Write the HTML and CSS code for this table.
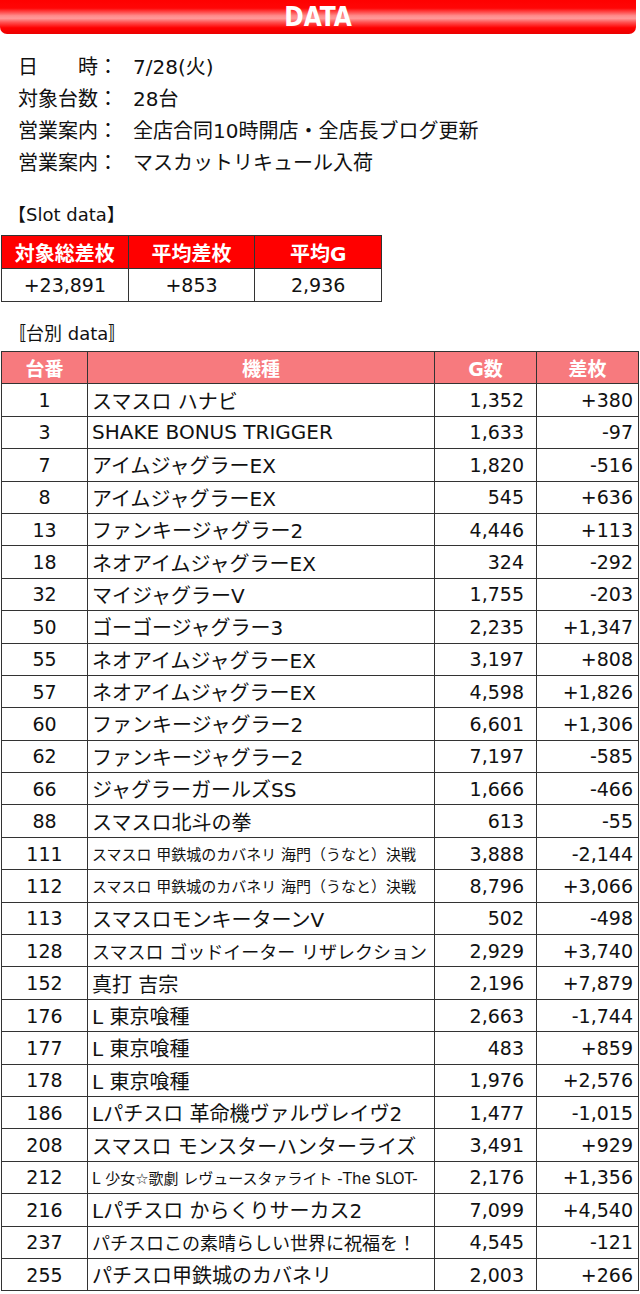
FILE: index.html
```html
<!DOCTYPE html>
<html lang="ja">
<head>
<meta charset="utf-8">
<title>DATA</title>
<link rel="stylesheet" href="styles.css">
</head>
<body>
<div class="page">
  <div class="titlebar">DATA</div>

  <div class="info">
    <div class="info-row"><span class="lbl">日　　時：</span><span class="val">7/28(火)</span></div>
    <div class="info-row"><span class="lbl">対象台数：</span><span class="val">28台</span></div>
    <div class="info-row"><span class="lbl">営業案内：</span><span class="val">全店合同10時開店・全店長ブログ更新</span></div>
    <div class="info-row"><span class="lbl">営業案内：</span><span class="val">マスカットリキュール入荷</span></div>
  </div>

  <div class="section-label slot-label">【Slot data】</div>
  <table class="slot">
    <tr><th>対象総差枚</th><th>平均差枚</th><th>平均G</th></tr>
    <tr><td>+23,891</td><td>+853</td><td>2,936</td></tr>
  </table>

  <div class="section-label unit-label">〚台別 data〛</div>
  <table class="units">
    <colgroup><col class="c1"><col class="c2"><col class="c3"><col class="c4"></colgroup>
    <thead>
      <tr><th>台番</th><th>機種</th><th>G数</th><th>差枚</th></tr>
    </thead>
    <tbody>
      <tr><td class="no">1</td><td class="name">スマスロ ハナビ</td><td class="g">1,352</td><td class="d">+380</td></tr>
      <tr><td class="no">3</td><td class="name">SHAKE BONUS TRIGGER</td><td class="g">1,633</td><td class="d">-97</td></tr>
      <tr><td class="no">7</td><td class="name">アイムジャグラーEX</td><td class="g">1,820</td><td class="d">-516</td></tr>
      <tr><td class="no">8</td><td class="name">アイムジャグラーEX</td><td class="g">545</td><td class="d">+636</td></tr>
      <tr><td class="no">13</td><td class="name">ファンキージャグラー2</td><td class="g">4,446</td><td class="d">+113</td></tr>
      <tr><td class="no">18</td><td class="name">ネオアイムジャグラーEX</td><td class="g">324</td><td class="d">-292</td></tr>
      <tr><td class="no">32</td><td class="name">マイジャグラーV</td><td class="g">1,755</td><td class="d">-203</td></tr>
      <tr><td class="no">50</td><td class="name">ゴーゴージャグラー3</td><td class="g">2,235</td><td class="d">+1,347</td></tr>
      <tr><td class="no">55</td><td class="name">ネオアイムジャグラーEX</td><td class="g">3,197</td><td class="d">+808</td></tr>
      <tr><td class="no">57</td><td class="name">ネオアイムジャグラーEX</td><td class="g">4,598</td><td class="d">+1,826</td></tr>
      <tr><td class="no">60</td><td class="name">ファンキージャグラー2</td><td class="g">6,601</td><td class="d">+1,306</td></tr>
      <tr><td class="no">62</td><td class="name">ファンキージャグラー2</td><td class="g">7,197</td><td class="d">-585</td></tr>
      <tr><td class="no">66</td><td class="name">ジャグラーガールズSS</td><td class="g">1,666</td><td class="d">-466</td></tr>
      <tr><td class="no">88</td><td class="name">スマスロ北斗の拳</td><td class="g">613</td><td class="d">-55</td></tr>
      <tr><td class="no">111</td><td class="name xs">スマスロ 甲鉄城のカバネリ 海門（うなと）決戦</td><td class="g">3,888</td><td class="d">-2,144</td></tr>
      <tr><td class="no">112</td><td class="name xs">スマスロ 甲鉄城のカバネリ 海門（うなと）決戦</td><td class="g">8,796</td><td class="d">+3,066</td></tr>
      <tr><td class="no">113</td><td class="name">スマスロモンキーターンV</td><td class="g">502</td><td class="d">-498</td></tr>
      <tr><td class="no">128</td><td class="name sm">スマスロ ゴッドイーター リザレクション</td><td class="g">2,929</td><td class="d">+3,740</td></tr>
      <tr><td class="no">152</td><td class="name">真打 吉宗</td><td class="g">2,196</td><td class="d">+7,879</td></tr>
      <tr><td class="no">176</td><td class="name">L 東京喰種</td><td class="g">2,663</td><td class="d">-1,744</td></tr>
      <tr><td class="no">177</td><td class="name">L 東京喰種</td><td class="g">483</td><td class="d">+859</td></tr>
      <tr><td class="no">178</td><td class="name">L 東京喰種</td><td class="g">1,976</td><td class="d">+2,576</td></tr>
      <tr><td class="no">186</td><td class="name">Lパチスロ 革命機ヴァルヴレイヴ2</td><td class="g">1,477</td><td class="d">-1,015</td></tr>
      <tr><td class="no">208</td><td class="name">スマスロ モンスターハンターライズ</td><td class="g">3,491</td><td class="d">+929</td></tr>
      <tr><td class="no">212</td><td class="name xxs">L 少女☆歌劇 レヴュースタァライト -The SLOT-</td><td class="g">2,176</td><td class="d">+1,356</td></tr>
      <tr><td class="no">216</td><td class="name">Lパチスロ からくりサーカス2</td><td class="g">7,099</td><td class="d">+4,540</td></tr>
      <tr><td class="no">237</td><td class="name sm">パチスロこの素晴らしい世界に祝福を！</td><td class="g">4,545</td><td class="d">-121</td></tr>
      <tr><td class="no">255</td><td class="name">パチスロ甲鉄城のカバネリ</td><td class="g">2,003</td><td class="d">+266</td></tr>
    </tbody>
  </table>
</div>
</body>
</html>
```

FILE: styles.css
```css
html, body {
  margin: 0;
  padding: 0;
  background: #ffffff;
}

body {
  font-family: "DejaVu Sans", "Noto Sans CJK JP", sans-serif;
  color: #111111;
}

.page {
  width: 640px;
}

.titlebar {
  width: 636px;
  height: 34px;
  border-radius: 0 0 7px 7px;
  background: linear-gradient(to bottom,
    #ff0000 0%,
    #ff0606 24%,
    #ff8a8a 46%,
    #ff9a9a 54%,
    #ff5050 66%,
    #ff0000 82%,
    #ea0000 100%);
  color: #ffffff;
  font-family: "DejaVu Sans Condensed", "DejaVu Sans", sans-serif;
  font-weight: bold;
  font-size: 26px;
  line-height: 34px;
  text-align: center;
}

.info {
  margin-top: 17px;
  padding-left: 18px;
  font-size: 20px;
}

.info-row {
  display: flex;
  height: 32px;
  line-height: 32px;
  white-space: nowrap;
}

.lbl {
  width: 115px;
}

.section-label {
  font-size: 18px;
  line-height: 28px;
  height: 28px;
  padding-left: 8px;
  white-space: nowrap;
}

.slot-label {
  margin-top: 22px;
}

table {
  border-collapse: collapse;
  margin-left: 1px;
}

.slot {
  margin-top: 6px;
  width: 381px;
  table-layout: fixed;
}

.slot th,
.slot td {
  border: 1px solid #333333;
  height: 32px;
  padding: 0;
  text-align: center;
  vertical-align: middle;
}

.slot th {
  background: #ff0000;
  color: #ffffff;
  font-size: 20px;
  font-weight: bold;
}

.slot td {
  font-size: 19px;
}

.unit-label {
  margin-top: 18px;
}

.units {
  margin-top: 3px;
  width: 637px;
  table-layout: fixed;
}

.c1 { width: 86px; }
.c2 { width: 347px; }
.c3 { width: 102px; }
.c4 { width: 102px; }

.units th,
.units td {
  border: 1px solid #333333;
  height: 31.4px;
  padding: 0;
  vertical-align: middle;
  white-space: nowrap;
  overflow: hidden;
}

.units th {
  background: #f77a7e;
  color: #ffffff;
  font-size: 19px;
  font-weight: bold;
  text-align: center;
}

.units td {
  font-size: 19px;
}

.units td.no {
  text-align: center;
}

.units td.name {
  font-size: 20px;
  padding-left: 4px;
  text-align: left;
}

.units td.name.sm { font-size: 18px; }
.units td.name.xs { font-size: 15px; }
.units td.name.xxs { font-size: 15px; }

.units td.g {
  text-align: right;
  padding-right: 12px;
}

.units td.d {
  text-align: right;
  padding-right: 5px;
}
```
